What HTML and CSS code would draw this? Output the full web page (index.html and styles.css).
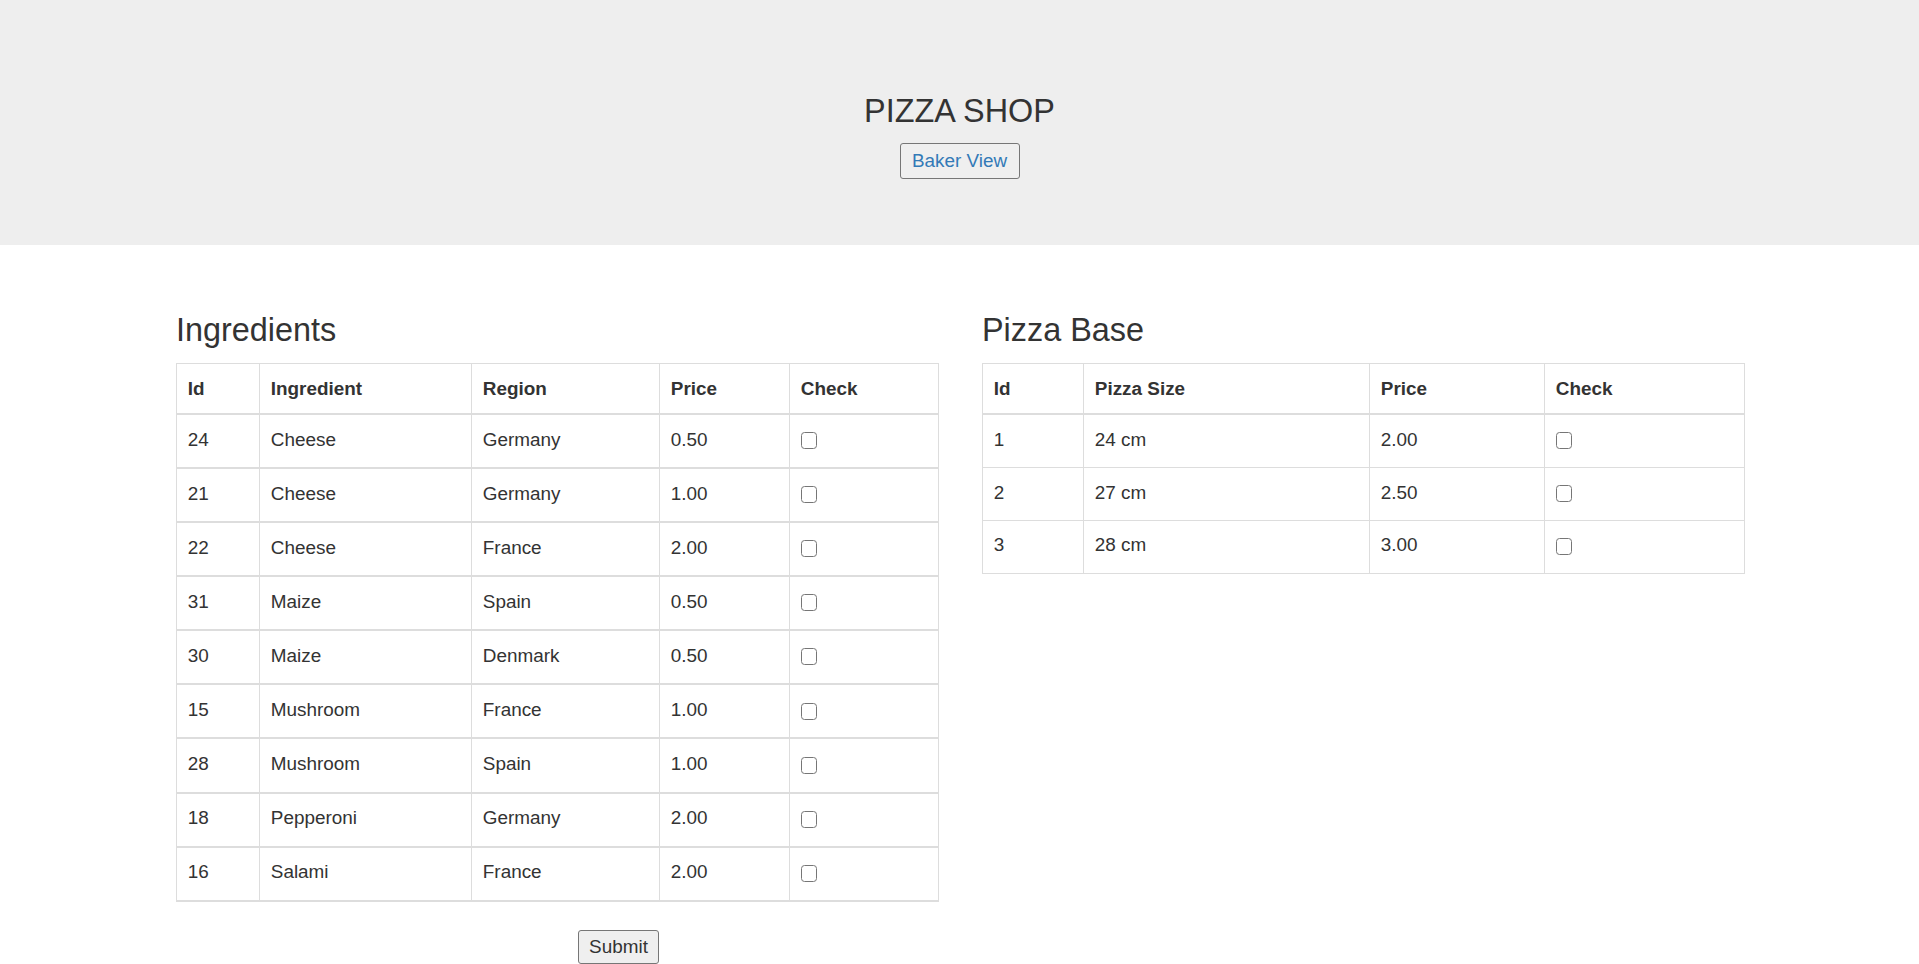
FILE: index.html
```html
<!DOCTYPE html>
<html lang="en">
<head>
<meta charset="utf-8">
<title>Pizza Shop</title>
<link rel="stylesheet" href="styles.css">
</head>
<body>
<header class="jumbotron">
  <h3 class="shop-title">PIZZA SHOP</h3>
  <div class="jumbo-actions">
    <button class="btn-plain btn-link-text" type="button">Baker View</button>
  </div>
</header>

<main class="content">
  <section class="panel">
    <h3 class="panel-title">Ingredients</h3>
    <table class="data-table ingredients">
      <colgroup>
        <col class="c-id"><col class="c-ing"><col class="c-region"><col class="c-price"><col class="c-check">
      </colgroup>
      <thead>
        <tr><th>Id</th><th>Ingredient</th><th>Region</th><th>Price</th><th>Check</th></tr>
      </thead>
      <tbody><tr><td>24</td><td>Cheese</td><td>Germany</td><td>0.50</td><td><input class="check" type="checkbox"></td></tr></tbody>
      <tbody><tr><td>21</td><td>Cheese</td><td>Germany</td><td>1.00</td><td><input class="check" type="checkbox"></td></tr></tbody>
      <tbody><tr><td>22</td><td>Cheese</td><td>France</td><td>2.00</td><td><input class="check" type="checkbox"></td></tr></tbody>
      <tbody><tr><td>31</td><td>Maize</td><td>Spain</td><td>0.50</td><td><input class="check" type="checkbox"></td></tr></tbody>
      <tbody><tr><td>30</td><td>Maize</td><td>Denmark</td><td>0.50</td><td><input class="check" type="checkbox"></td></tr></tbody>
      <tbody><tr><td>15</td><td>Mushroom</td><td>France</td><td>1.00</td><td><input class="check" type="checkbox"></td></tr></tbody>
      <tbody><tr><td>28</td><td>Mushroom</td><td>Spain</td><td>1.00</td><td><input class="check" type="checkbox"></td></tr></tbody>
      <tbody><tr><td>18</td><td>Pepperoni</td><td>Germany</td><td>2.00</td><td><input class="check" type="checkbox"></td></tr></tbody>
      <tbody><tr><td>16</td><td>Salami</td><td>France</td><td>2.00</td><td><input class="check" type="checkbox"></td></tr></tbody>
    </table>
    <div class="submit-row">
      <button class="btn-plain btn-submit" type="button">Submit</button>
    </div>
  </section>

  <section class="panel">
    <h3 class="panel-title">Pizza Base</h3>
    <table class="data-table bases">
      <colgroup>
        <col class="b-id"><col class="b-size"><col class="b-price"><col class="b-check">
      </colgroup>
      <thead>
        <tr><th>Id</th><th>Pizza Size</th><th>Price</th><th>Check</th></tr>
      </thead>
      <tbody>
        <tr><td>1</td><td>24 cm</td><td>2.00</td><td><input class="check" type="checkbox"></td></tr>
        <tr><td>2</td><td>27 cm</td><td>2.50</td><td><input class="check" type="checkbox"></td></tr>
        <tr><td>3</td><td>28 cm</td><td>3.00</td><td><input class="check" type="checkbox"></td></tr>
      </tbody>
    </table>
  </section>
</main>
</body>
</html>
```

FILE: styles.css
```css
* {
  box-sizing: border-box;
}

html, body {
  margin: 0;
  padding: 0;
}

body {
  font-family: "Liberation Sans", Arial, sans-serif;
  font-size: 18.9px;
  line-height: 27px;
  color: #333;
  background: #fff;
}

/* ---------- Jumbotron ---------- */
.jumbotron {
  background: #eee;
  height: 245px;
  padding-top: 94.3px;
  text-align: center;
}

.shop-title {
  margin: 0;
  font-size: 32.4px;
  line-height: 35.6px;
  font-weight: 400;
  color: #333;
}

.jumbo-actions {
  margin-top: 13.1px;
  line-height: 0;
}

.btn-plain {
  font-family: "Liberation Sans", Arial, sans-serif;
  font-size: 18.9px;
  background: #efefef;
  border: 1px solid #767676;
  border-radius: 3px;
  margin: 0;
  cursor: pointer;
}

.btn-link-text {
  color: #337ab7;
  width: 120px;
  height: 36px;
  padding: 0 8px;
  line-height: 34px;
}

/* ---------- Content ---------- */
.content {
  display: grid;
  grid-template-columns: 1fr 1fr;
  column-gap: 43px;
  padding: 67.7px 176px 0;
  align-items: start;
}

.panel-title {
  margin: 0 0 15px;
  font-size: 32.4px;
  line-height: 35.6px;
  font-weight: 400;
  color: #333;
}

.data-table {
  width: 100%;
  border-collapse: collapse;
  table-layout: fixed;
  border: 1px solid #ddd;
}

.data-table th,
.data-table td {
  border: 1px solid #ddd;
  text-align: left;
  vertical-align: top;
  padding: 10.8px;
  line-height: 27px;
  white-space: nowrap;
}

.data-table th {
  font-weight: 700;
  border-bottom: 2px solid #ddd;
}

.data-table td {
  padding-bottom: 14.1px;
}

.ingredients td {
  padding-bottom: 14.3px;
}

.ingredients tbody + tbody td {
  border-top: 2px solid #ddd;
}

.ingredients {
  border-bottom: 2px solid #ddd;
}

.c-id { width: 83px; }
.c-ing { width: 212px; }
.c-region { width: 188px; }
.c-price { width: 130px; }
.c-check { width: 149px; }

.b-id { width: 101px; }
.b-size { width: 286px; }
.b-price { width: 175px; }
.b-check { width: 200px; }

.check {
  -webkit-appearance: none;
  appearance: none;
  display: inline-block;
  width: 16.5px;
  height: 17px;
  margin: 6.4px 0 0;
  vertical-align: top;
  border: 1.4px solid #767676;
  border-radius: 3.5px;
  background: #fff;
}

.submit-row {
  padding-left: 402px;
  margin-top: 28.6px;
  line-height: 0;
}

.btn-submit {
  color: #333;
  width: 81px;
  height: 34px;
  padding: 0 9px;
  line-height: 32px;
}
```
